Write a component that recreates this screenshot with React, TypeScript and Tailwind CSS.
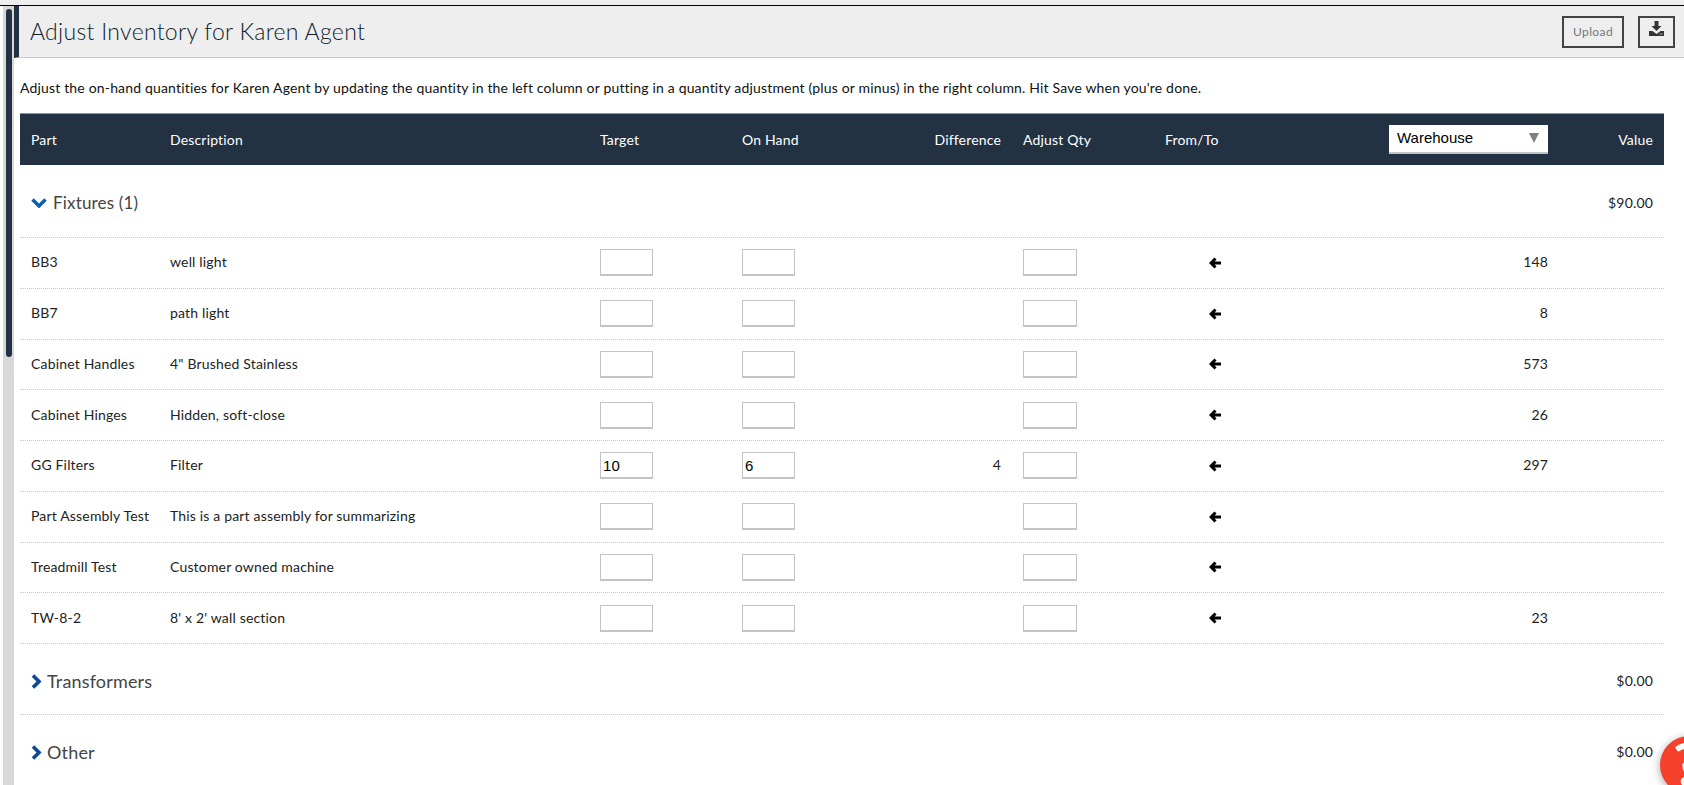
const parts = [
  { part: "BB3", desc: "well light", count: "148" },
  { part: "BB7", desc: "path light", count: "8" },
  { part: "Cabinet Handles", desc: '4" Brushed Stainless', count: "573" },
  { part: "Cabinet Hinges", desc: "Hidden, soft-close", count: "26" },
  { part: "GG Filters", desc: "Filter", target: "10", onHand: "6", diff: "4", count: "297" },
  { part: "Part Assembly Test", desc: "This is a part assembly for summarizing" },
  { part: "Treadmill Test", desc: "Customer owned machine" },
  { part: "TW-8-2", desc: "8' x 2' wall section", count: "23" },
];

const cols = "grid grid-cols-[139px_430px_142px_142px_117px_22px_142px_224px_159px_116px] items-center pl-[11px]";

const QtyInput = ({ value, wide }: { value?: string; wide?: boolean }) => (
  <input
    readOnly
    value={value ?? ""}
    className={`${wide ? "w-[54px]" : "w-[53px]"} h-[27px] border border-[#c4c4c4] border-b-[2px] bg-white pl-[2px] text-[15px] text-black outline-none font-['Liberation_Sans',sans-serif]`}
  />
);

const Group = ({ name, value, open }: { name: string; value: string; open?: boolean }) => (
  <div className={`flex items-center justify-between px-[11px] border-b border-dotted border-[#c8c8c8] ${open ? "h-[73px]" : "h-[71px]"}`}>
    <div className={`flex items-center pt-[4px] text-[#444] ${open ? "gap-[6px] text-[17px]" : "gap-[5px] text-[18px]"}`}>
      {open ? (
        <svg width="16" height="10" viewBox="0 0 16 10" fill="none">
          <path d="M1.5 1.5 8 8l6.5-6.5" stroke="#0b5cb8" strokeWidth="3.4" />
        </svg>
      ) : (
        <svg width="11" height="15" viewBox="0 0 11 15" fill="none">
          <path d="M2 1.5 8 7.5l-6 6" stroke="#0b4a96" strokeWidth="3.6" />
        </svg>
      )}
      <span>{name}</span>
    </div>
    <span className="pt-[2px] text-[14px] text-[#222]">{value}</span>
  </div>
);

const App = () => {
  return (
    <div className="h-[785px] overflow-hidden bg-white relative font-['Lato',sans-serif] text-[14px] tracking-[0.17px] text-[#222]">
      <div className="h-[5px] bg-[#eeeeee]" />
      <div className="h-px bg-black" />
      <div className="flex">
        <div className="w-[14px] shrink-0 pl-[3px]">
          <div className="w-[11px] h-[779px] bg-[#d8d8d8] pl-[3px] pt-[3px]">
            <div className="w-[6px] h-[348px] rounded-[3px] bg-[#223243]" />
          </div>
        </div>
        <div className="flex-1 min-w-0">
          <div className="h-[52px] bg-[#eeeeee] border-l-[5px] border-l-[#223243] border-b border-b-[#c8c8c8] flex items-center justify-between pl-[11px] pr-[9px]">
            <h1 className="text-[23px] font-light tracking-[0.3px] text-[#0f1d2c]">Adjust Inventory for Karen Agent</h1>
            <div className="flex items-center gap-[14px]">
              <button className="w-[62px] h-[32px] pt-[1px] border-[2px] border-[#444] text-[12px] tracking-[0.4px] text-[#777]">Upload</button>
              <button className="w-[37px] h-[32px] border-[2px] border-[#444] flex justify-center pt-[3px]">
                <svg width="15" height="15" viewBox="0 0 15 15">
                  <path d="M5.5 0h4v5h3l-5 5-5-5h3z" fill="#333" />
                  <path d="M0 10h3.5l4 3 4-3H15v5H0z" fill="#333" />
                  <path d="M10.5 12.5h1v1h-1zM12.5 12.5h1v1h-1z" fill="#eeeeee" />
                </svg>
              </button>
            </div>
          </div>
          <div className="pl-[6px] pr-[20px]">
            <p className="h-[55px] pt-[20px] leading-[20px] text-[#111]">
              Adjust the on-hand quantities for Karen Agent by updating the quantity in the left column or putting in a quantity adjustment (plus or minus) in the right column. Hit Save when you're done.
            </p>
            <div className={`${cols} h-[52px] pb-[1px] bg-[#223243] border-t border-t-[#8a96a3] text-white`}>
              <span>Part</span>
              <span>Description</span>
              <span>Target</span>
              <span>On Hand</span>
              <span className="text-right">Difference</span>
              <span />
              <span>Adjust Qty</span>
              <span>From/To</span>
              <div className="w-[159px] h-[29px] pt-[1px] bg-white border-b-[2px] border-[#c4c4c4] flex items-center justify-between pl-[8px] pr-[9px] font-['Liberation_Sans',sans-serif] text-[15px] tracking-normal text-black">
                Warehouse
                <span className="w-0 h-0 mb-[2px] border-x-[5px] border-x-transparent border-t-[10px] border-t-[#808080]" />
              </div>
              <span className="text-right pr-[11px]">Value</span>
            </div>
            <Group name="Fixtures (1)" value="$90.00" open />
            {parts.map((p) => (
              <div key={p.part} className={`${cols} h-[50.75px] border-b border-dotted border-[#c8c8c8]`}>
                <span className="pb-[2px]">{p.part}</span>
                <span className="pb-[2px]">{p.desc}</span>
                <div><QtyInput value={p.target} /></div>
                <div><QtyInput value={p.onHand} /></div>
                <span className="pb-[2px] text-right">{p.diff}</span>
                <span />
                <div><QtyInput wide /></div>
                <div className="pl-[44px]">
                  <svg width="12" height="12" viewBox="0 0 12 12" fill="none" className="block">
                    <path d="M6.5 1.5 2 6l4.5 4.5M3 6h9" stroke="#000" strokeWidth="3" />
                  </svg>
                </div>
                <span className="pb-[2px] text-right">{p.count}</span>
                <span />
              </div>
            ))}
            <Group name="Transformers" value="$0.00" />
            <Group name="Other" value="$0.00" />
          </div>
        </div>
      </div>
      <div className="absolute left-[1660px] top-[736px] w-[58px] h-[58px] pr-[4px] rounded-full bg-[#f5402c] shadow-[0_2px_10px_rgba(0,0,0,0.35)] text-white text-[60px] font-bold leading-[54px] text-center">
        ?
      </div>
    </div>
  );
};

export default App;
